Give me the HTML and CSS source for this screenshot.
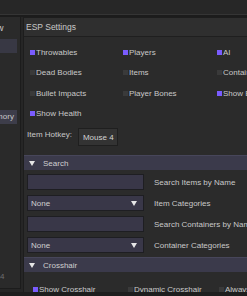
FILE: index.html
```html
<!DOCTYPE html>
<html lang="en">
<head>
  <meta charset="UTF-8" />
  <meta name="viewport" content="width=device-width, initial-scale=1.0"/>
  <title>ESP Settings</title>
  <link rel="stylesheet" href="styles.css">
</head>
<body>

<div class="topbar"></div>

<div class="layout">
  <aside class="sidebar">
    <div class="side-title">Show</div>
    <div class="side-item active">ESP</div>
    <div class="side-item">Aim</div>
    <div class="side-item">Loot</div>
    <div class="side-item">Misc</div>
    <div class="side-item">Info</div>
    <div class="side-item long hover">Memory</div>
    <div class="side-version">v2.14</div>
  </aside>

  <main class="panel">
    <div class="panel-head">ESP Settings</div>
    <div class="panel-body">

      <div class="checks">
        <label class="check on"><i></i>Throwables</label>
        <label class="check on"><i></i>Players</label>
        <label class="check on"><i></i>AI</label>
        <label class="check"><i></i>Dead Bodies</label>
        <label class="check"><i></i>Items</label>
        <label class="check"><i></i>Containers</label>
        <label class="check"><i></i>Bullet Impacts</label>
        <label class="check"><i></i>Player Bones</label>
        <label class="check on"><i></i>Show Bones</label>
        <label class="check on"><i></i>Show Health</label>
      </div>

      <div class="hotkey">
        <span class="hotkey-label">Item Hotkey:</span>
        <button class="key">Mouse 4</button>
      </div>

      <div class="section">
        <div class="section-head">
          <svg class="arrow" width="6" height="5" viewBox="0 0 6 5"><polygon points="0,0 6,0 3,5" fill="#e6e6e6"/></svg>
          Search
        </div>
        <div class="section-body">
          <div class="field-row">
            <div class="field"></div>
            <span class="field-label">Search Items by Name</span>
          </div>
          <div class="field-row">
            <div class="field select">None
              <svg width="6" height="5" viewBox="0 0 6 5"><polygon points="0,0 6,0 3,5" fill="#e6e6e6"/></svg>
            </div>
            <span class="field-label">Item Categories</span>
          </div>
          <div class="field-row">
            <div class="field"></div>
            <span class="field-label">Search Containers by Name</span>
          </div>
          <div class="field-row">
            <div class="field select">None
              <svg width="6" height="5" viewBox="0 0 6 5"><polygon points="0,0 6,0 3,5" fill="#e6e6e6"/></svg>
            </div>
            <span class="field-label">Container Categories</span>
          </div>
        </div>
      </div>

      <div class="section">
        <div class="section-head">
          <svg class="arrow" width="6" height="5" viewBox="0 0 6 5"><polygon points="0,0 6,0 3,5" fill="#e6e6e6"/></svg>
          Crosshair
        </div>
        <div class="checks cross">
          <label class="check on"><i></i>Show Crosshair</label>
          <label class="check"><i></i>Dynamic Crosshair</label>
          <label class="check"><i></i>Always Show</label>
        </div>
      </div>

    </div>
  </main>
</div>

<div class="footer"></div>

</body>
</html>
```

FILE: styles.css
```css
body {
  margin: 0;
  width: 247px;
  height: 296px;
  overflow: hidden;
  background-color: #262626;
  color: #c9c9c9;
  font-family: "Liberation Sans", Arial, sans-serif;
  font-size: 8px;
}

.topbar {
  height: 14px;
  background-color: #272727;
  border-bottom: 1px solid #353535;
  box-shadow: 0 1px 0 #1c1c1c, 0 2px 0 #1c1c1c;
  margin-bottom: 2px;
}

.layout {
  display: flex;
  gap: 2px;
  height: 275px;
  overflow: hidden;
}

/* barra lateral (cortada pela esquerda) */
.sidebar {
  flex: none;
  width: 61px;
  margin-left: -40px;
  height: 272px;
  display: flex;
  flex-direction: column;
  padding-top: 4px;
  background-color: #2a2a2a;
  border-right: 1px solid #1c1c1c;
  border-bottom: 1px solid #1c1c1c;
  box-sizing: border-box;
  overflow: hidden;
}

.side-title {
  height: 14px;
  line-height: 14px;
  padding-left: 21px;
  font-size: 9px;
  margin-bottom: 4px;
}

.side-item {
  height: 14.2px;
  line-height: 14px;
  padding-left: 2px;
  margin-right: 3px;
}

.side-item.long {
  padding-left: 25px;
}

.side-item.active {
  background-color: #383844;
}

.side-item.hover {
  background-color: #3d3d4a;
}

.side-version {
  margin-top: auto;
  padding-left: 25px;
  padding-bottom: 7px;
  color: #6e6e6e;
}

/* painel principal */
.panel {
  flex: none;
  width: 330px;
  background-color: #2b2b2b;
  border-left: 1px solid #1d1d1d;
  border-top: 1px solid #1d1d1d;
}

.panel-head {
  height: 18px;
  line-height: 18px;
  padding-left: 2px;
  font-size: 8.5px;
  background-color: #2f2f2f;
  border-bottom: 1px solid #1f1f1f;
}

.panel-body {
  padding-top: 5px;
}

.checks {
  display: grid;
  grid-template-columns: 93px 94px 94px;
  grid-auto-rows: 20.5px;
  padding-left: 6px;
}

.check {
  display: flex;
  align-items: center;
  white-space: nowrap;
}

.check i {
  width: 5px;
  height: 5px;
  margin-right: 1px;
  background-color: #3a3a3a;
}

.check.on i {
  background-color: #7a5cff;
}

.hotkey {
  display: flex;
  align-items: flex-start;
  gap: 6px;
  margin-top: 4px;
  padding-left: 3px;
  height: 18px;
}

.hotkey-label {
  padding-top: 2px;
}

.key {
  height: 18px;
  padding: 0 3px 0 4px;
  margin: 0;
  font: inherit;
  color: #d2d2d2;
  background-color: #333333;
  border: 1px solid #1f1f1f;
}

.section {
  margin-top: 9px;
}

.section + .section {
  margin-top: 0;
}

.section-head {
  display: flex;
  align-items: center;
  height: 15px;
  background-color: #3b3a4b;
  border-top: 1px solid #47465a;
  box-sizing: border-box;
  padding-left: 5px;
  color: #cfcfcf;
}

.arrow {
  margin-right: 8px;
}

.section-body {
  display: flex;
  flex-direction: column;
  gap: 5px;
  padding: 4px 0 4px 3px;
}

.field-row {
  display: flex;
  align-items: center;
  gap: 10px;
}

.field {
  width: 117px;
  height: 16px;
  box-sizing: border-box;
  background-color: #393748;
  border: 1px solid #1e1e22;
}

.field.select {
  display: flex;
  align-items: center;
  justify-content: space-between;
  padding: 0 6px 0 3px;
  color: #cfcfcf;
}

.field-label {
  white-space: nowrap;
}

.checks.cross {
  grid-template-columns: 95px 91px 91px;
  grid-auto-rows: 20px;
  padding-top: 7px;
  padding-left: 9px;
}

.footer {
  height: 4px;
  background-color: #1e1e1e;
}
```
